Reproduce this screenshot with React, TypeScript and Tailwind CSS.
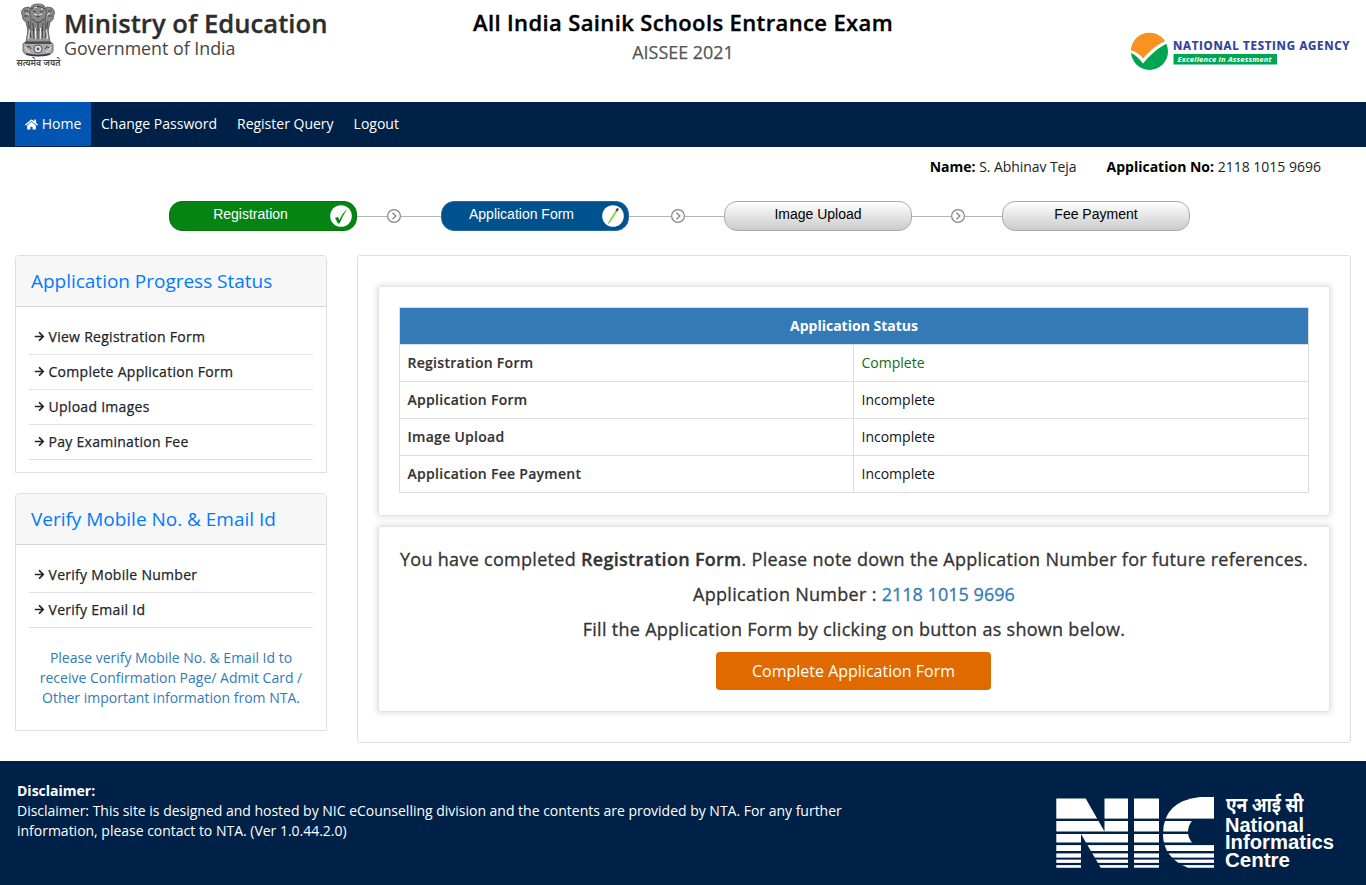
import { FaArrowRight, FaHome } from "react-icons/fa";
import type { ReactNode } from "react";

function Emblem() {
  return (
    <svg width="48" height="68" viewBox="0 0 48 68" className="shrink-0" role="img" aria-label="State Emblem">
      <g fill="#8a8a8a" stroke="#505050" strokeWidth="0.8">
        <path d="M9 6 Q5 9 7.500 14 Q7 18 11 20 Q12 25 13 29 L17 31 L17 10 L14 5 Z" />
        <path d="M37 6 Q41 9 38.500 14 Q39 18 35 20 Q34 25 33 29 L29 31 L29 10 L32 5 Z" />
        <path d="M16 5 Q17 2 23 2 Q29 2 30 5 Q33 11 30 16 L31 32 L15 32 L16 16 Q13 11 16 5 Z" />
        <path d="M13 28 L11 40 H35 L33 28 Z" fill="#999" />
        <path d="M8 44 Q7 40 13 40 H33 Q39 40 38 44 L38 49 Q37 54 23 54 Q9 54 8 49 Z" fill="#aaa" />
      </g>
      <g stroke="#383838" strokeWidth="0.9" fill="none">
        <path d="M16 7 Q23 2 30 7 M18 9 L21 10 M25 10 L28 9 M21 14 Q23 16 25 14 M9 9 L13 9 M33 9 L37 9 M9 14 L13 14 M33 14 L37 14" />
        <path d="M17 17 Q23 24 29 17 M18 21 L19 37 M28 21 L27 37 M23 21 V37 M13 19 L16 36 M33 19 L30 36" />
        <path d="M10 41 H36 M11 52 Q23 55 35 52" strokeWidth="1.600" />
      </g>
      <g stroke="#ededed" strokeWidth="1" fill="none">
        <path d="M20.500 26 V37 M25.500 26 V37 M14.500 27 L13.500 37 M31.500 27 L32.500 37 M19 12 L22 13 M24 13 L27 12 M11 11 L14 13 M32 13 L35 11 M19 6 L22 5 M26 7 L28 7" />
        <path d="M10 45 Q12 50 15 50 M31 50 Q34 50 36 45" />
      </g>
      <circle cx="23" cy="47" r="4" fill="#e5e5e5" stroke="#555" />
      <circle cx="23" cy="47" r="1.400" fill="#555" />
      <path d="M12 45 q3 -2 4 2 M30 47 q2 -4 4 -1" stroke="#333" fill="none" />
      <text x="1.500" y="64" fontSize="9" fontWeight="600" fill="#444" textLength="44" lengthAdjust="spacingAndGlyphs" fontFamily="Noto Sans Devanagari, Noto Sans, sans-serif">सत्यमेव जयते</text>
    </svg>
  );
}

function AgencyLogo() {
  return (
    <svg width="222" height="40" viewBox="0 0 222 40" role="img" aria-label="National Testing Agency">
      <circle cx="19.500" cy="19.500" r="18.500" fill="#00a551" />
      <path d="M1 19 A18.500 18.500 0 0 1 34.700 8.700 Q22 17 13 27 Q8 22 1 19 Z" fill="#f7931e" />
      <path d="M0.500 18 Q8 20 13 26.500 Q22 15.500 35 9 L36.500 11.500 Q23 19 13 31.500 Q8 24.500 0.500 20.500 Z" fill="#fff" />
      <text x="43" y="17.700" fontSize="11.500" fontWeight="700" fill="#30409b" stroke="#30409b" strokeWidth="0.2" textLength="176.500" fontFamily="Open Sans, sans-serif">NATIONAL TESTING AGENCY</text>
      <rect x="43.500" y="22" width="103.500" height="10.500" fill="#00a551" />
      <text x="47.500" y="29.800" fontSize="7.500" fontWeight="700" fontStyle="italic" fill="#fff" textLength="94" fontFamily="Open Sans, sans-serif">Excellence in Assessment</text>
    </svg>
  );
}

function NicLogo() {
  return (
    <svg width="280" height="78" viewBox="0 0 280 78" role="img" aria-label="National Informatics Centre">
      <g fill="#fff">
        <path d="M0.300 6.500 H29.700 L48.500 39.500 V6.500 H72 V75.700 H44.700 L25 42 V75.700 H0.300 Z" />
        <rect x="78" y="6.500" width="25" height="69.200" />
        <path d="M158 5 V75.700 H132 Q107 66 107 42 Q107 9 144 5 Z" />
      </g>
      <path d="M136.700 28 H159 V51 H136.700 Q132 46.500 132 40 Q132 33.500 136.700 28 Z" fill="#002147" />
      <g fill="#002147">
        <rect y="26.600" width="160" height="2.400" />
        <rect y="39.500" width="136" height="2.500" />
        <rect y="50.500" width="160" height="2.600" />
        <rect y="59" width="160" height="2.400" />
        <rect y="65.600" width="160" height="2" />
        <rect y="70.900" width="160" height="2.200" />
      </g>
      <g fill="#fff" fontFamily="Liberation Sans, Arial, sans-serif" fontWeight="700" fontSize="19.500">
        <text x="170" y="19.700" fontSize="20.500" textLength="77.500" lengthAdjust="spacingAndGlyphs" fontFamily="Noto Sans Devanagari, Noto Sans, sans-serif">एन आई सी</text>
        <text x="169" y="40" textLength="79" lengthAdjust="spacingAndGlyphs">National</text>
        <text x="169" y="57.300" textLength="109" lengthAdjust="spacingAndGlyphs">Informatics</text>
        <text x="169" y="75.300" textLength="65" lengthAdjust="spacingAndGlyphs">Centre</text>
      </g>
    </svg>
  );
}

function Connector({ className, lead }: { className: string; lead: string }) {
  return (
    <div className={`flex items-center ${className}`}>
      <span className={`h-px bg-[#b5b5b5] ${lead}`} />
      <svg width="14" height="14" viewBox="0 0 14 14" fill="none" stroke="#858585" className="shrink-0">
        <circle cx="7" cy="7" r="6.400" strokeWidth="1.200" />
        <path d="M5.500 3.800 L8.800 7 L5.500 10.200" strokeWidth="1.300" />
      </svg>
      <span className="h-px flex-1 bg-[#b5b5b5]" />
    </div>
  );
}

function Step({ label, className, icon }: { label: string; className: string; icon?: ReactNode }) {
  return (
    <div className={`flex h-[30px] w-[188px] rounded-[13px] border ${className}`}>
      <span className="flex-1 pt-[2px] text-center font-['Liberation_Sans',Arial,sans-serif] text-[14px] leading-[21px]">{label}</span>
      {icon && <span className="mt-[3px] mr-[4px] -ml-[26px] h-[22px] w-[22px]">{icon}</span>}
    </div>
  );
}

function Panel({ title, items, note }: { title: string; items: string[]; note?: string }) {
  return (
    <section className="rounded-t-[4px] border border-[#dfdfdf]">
      <h2 className="h-[51px] rounded-t-[3px] border-b border-[#d5d5d5] bg-[#f7f7f7] pl-[15px] text-[19px] leading-[50px] tracking-[-0.02px] text-[#007bff]">{title}</h2>
      <ul className="mx-[13px] mt-[13px] mb-[12px]">
        {items.map((item) => (
          <li key={item} className="flex h-[35px] items-center gap-[4px] border-b border-[#e2e2e2] pb-[2px] pl-[4.5px] text-[14px] tracking-[0.28px] text-[#212529] [-webkit-text-stroke:0.25px_#212529]">
            <FaArrowRight className="mt-[1px] h-[11px] w-[11px]" />
            {item}
          </li>
        ))}
      </ul>
      {note && <p className="mx-[22px] mt-[20px] mb-[22px] text-center text-[14px] leading-[20px] text-[#337ab7]">{note}</p>}
    </section>
  );
}

const statuses = [
  ["Registration Form", "Complete"],
  ["Application Form", "Incomplete"],
  ["Image Upload", "Incomplete"],
  ["Application Fee Payment", "Incomplete"],
];

export default function App() {
  return (
    <div className="h-[885px] w-[1366px] overflow-hidden bg-white font-['Open_Sans',sans-serif] text-[14px] text-black">
      <header className="grid h-[102px] grid-cols-[473px_420px_1fr]">
        <div className="flex pt-[2px] pl-[15px]">
          <Emblem />
          <div className="pl-[1px]">
            <div className="pt-[5px] text-[25.6px] leading-[34px] font-semibold tracking-[0.03px] whitespace-nowrap text-[#2d2d2d] [-webkit-text-stroke:0.3px_#2d2d2d]">Ministry of Education</div>
            <div className="text-[17.8px] leading-[15px] text-[#444]">Government of India</div>
          </div>
        </div>
        <div className="pt-[7px] text-center">
          <h1 className="flex justify-center text-[22px] leading-[30px] font-semibold tracking-[0.37px] whitespace-nowrap [-webkit-text-stroke:0.35px_#000]">All India Sainik Schools Entrance Exam</h1>
          <p className="pt-[1px] text-[17.9px] leading-[29px] text-[#555] [-webkit-text-stroke:0.25px_#555]">AISSEE 2021</p>
        </div>
        <div className="flex justify-end pt-[32px] pr-[14px]"><AgencyLogo /></div>
      </header>

      <nav className="flex h-[45px] items-start bg-[#002147] pl-[15px] text-[14px] leading-[44px] text-white">
        <a className="flex h-[44px] w-[76px] items-center justify-center gap-[4px] bg-[#0056b0]"><FaHome className="h-[13px] w-[13px]" />Home</a>
        <a className="px-[10px]">Change Password</a>
        <a className="px-[10px]">Register Query</a>
        <a className="px-[10px]">Logout</a>
      </nav>

      <div className="flex h-[54px] justify-end gap-[30px] pt-[10px] pr-[45px] leading-[20px]">
        <span><b>Name:</b> <span className="tracking-[-0.07px] text-[#222]">S. Abhinav Teja</span></span>
        <span><b>Application No:</b> <span className="text-[#222]">2118 1015 9696</span></span>
      </div>

      <div className="flex h-[54px] items-start pl-[169px]">
        <Step
          label="Registration"
          className="border-[#087408] bg-[#058414] text-white [&>span:first-child]:pr-[25px]"
          icon={
            <svg width="22" height="22" viewBox="0 0 22 22">
              <circle cx="11" cy="11" r="10.800" fill="#fff" />
              <path d="M5 13 L8 11.800 L9.300 15 Q12.500 8 17.500 3.500 Q12.500 11 9.500 18.500 L8 18.500 Z" fill="#078a12" />
            </svg>
          }
        />
        <Connector className="h-[30px] w-[84px]" lead="w-[30px]" />
        <Step
          label="Application Form"
          className="border-[#276ca5] bg-[#00528e] text-white [&>span:first-child]:pr-[27px]"
          icon={
            <svg width="22" height="22" viewBox="0 0 22 22">
              <circle cx="11" cy="11" r="10.800" fill="#fff" />
              <path d="M8 16 L14.500 6" stroke="#8ed34a" strokeWidth="2" />
              <path d="M14.500 6 L16 3.500" stroke="#6b3030" strokeWidth="2.400" />
              <path d="M6.500 18.500 L8 16" stroke="#777" />
            </svg>
          }
        />
        <Connector className="h-[30px] w-[95px]" lead="w-[42px]" />
        <Step label="Image Upload" className="border-[#aaa] bg-linear-to-b from-white to-[#cbcbcb]" />
        <Connector className="h-[30px] w-[90px]" lead="w-[39px]" />
        <Step label="Fee Payment" className="border-[#aaa] bg-linear-to-b from-white to-[#cbcbcb]" />
      </div>

      <main className="flex h-[506px] gap-[30px] pl-[15px]">
        <aside className="flex w-[312px] flex-col gap-[20px]">
          <Panel title="Application Progress Status" items={["View Registration Form", "Complete Application Form", "Upload Images", "Pay Examination Fee"]} />
          <Panel title="Verify Mobile No. & Email Id" items={["Verify Mobile Number", "Verify Email Id"]} note="Please verify Mobile No. & Email Id to receive Confirmation Page/ Admit Card / Other important information from NTA." />
        </aside>
        <div className="flex h-[488px] w-[994px] flex-col gap-[10px] rounded-[3px] border border-[#dedede] px-[20px] pt-[30px]">
          <section className="h-[230px] rounded-[3px] border border-[#e3e3e3] px-[20px] pt-[20px] shadow-[0_0_6px_1px_#ddd]">
            <table className="w-[910px] border-collapse text-[14px] leading-[20px]">
              <thead>
                <tr className="h-[37px]"><th colSpan={2} className="border border-[#ddd] bg-[#337ab7] font-bold text-white">Application Status</th></tr>
              </thead>
              <tbody>
                {statuses.map(([name, state]) => (
                  <tr key={name} className="h-[37px]">
                    <td className="w-[454px] border border-[#ddd] px-[7.5px] font-semibold tracking-[0.28px] text-[#333] [-webkit-text-stroke:0.15px_#333]">{name}</td>
                    <td className={`border border-[#ddd] px-[7.5px] ${state === "Complete" ? "text-[#156b15]" : "text-[#111]"}`}>{state}</td>
                  </tr>
                ))}
              </tbody>
            </table>
          </section>
          <section className="h-[186px] rounded-[3px] border border-[#e3e3e3] pt-[15px] text-center text-[18px] leading-[35px] tracking-[0.29px] whitespace-nowrap text-[#333] shadow-[0_0_6px_1px_#ddd]">
            <div className="[-webkit-text-stroke:0.3px]">
              <p>You have completed <b className="font-semibold">Registration Form</b>. Please note down the Application Number for future references.</p>
              <p>Application Number : <span className="tracking-[0.03px] text-[#337ab7]">2118 1015 9696</span></p>
              <p>Fill the Application Form by clicking on button as shown below.</p>
            </div>
            <button className="mt-[5px] ml-[337px] block h-[38px] w-[275px] rounded-[4px] bg-[#e06a00] text-[16px] leading-[38px] font-normal tracking-normal text-white">Complete Application Form</button>
          </section>
        </div>
      </main>

      <footer className="flex h-[124px] justify-between bg-[#002147] pl-[17px] text-[14px] leading-[20px] text-white">
        <div className="w-[850px] pt-[20px]">
          <p className="font-bold">Disclaimer:</p>
          <p className="tracking-[-0.012px]">Disclaimer: This site is designed and hosted by NIC eCounselling division and the contents are provided by NTA. For any further information, please contact to NTA. (Ver 1.0.44.2.0)</p>
        </div>
        <div className="pt-[31px] pr-[30px]"><NicLogo /></div>
      </footer>
    </div>
  );
}
